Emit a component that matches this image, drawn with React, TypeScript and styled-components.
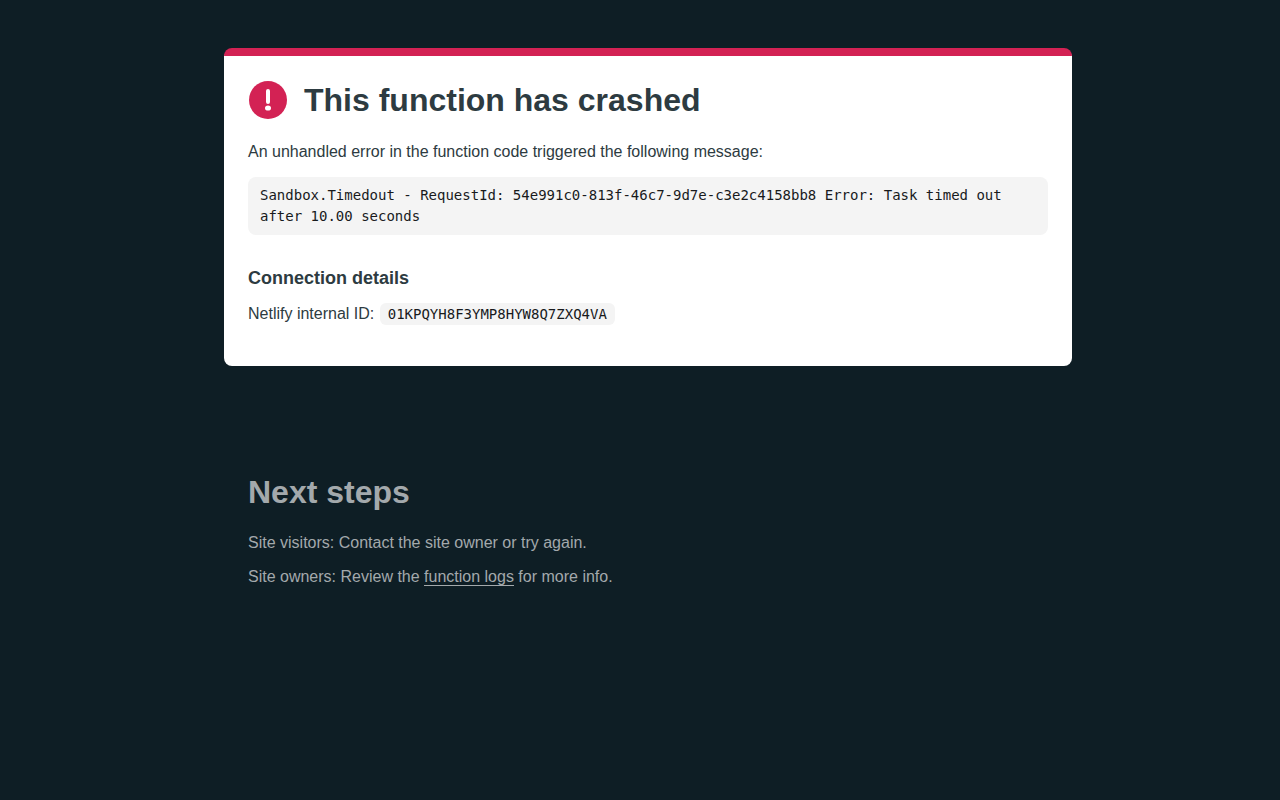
import React from "react";
import styled, { createGlobalStyle } from "styled-components";

const Global = createGlobalStyle`
  html, body { margin: 0; padding: 0; background: #0e1e25; }
  body { font-family: "Liberation Sans", Arial, sans-serif; font-size: 16px; line-height: 24px; }
`;
const Page = styled.main`
  width: 848px;
  margin: 0 auto;
  padding-top: 48px;
  min-height: 800px;
  box-sizing: border-box;
  position: relative;
  left: 8px;
`;
const Card = styled.section`
  background: #fff;
  border-top: 8px solid #d32254;
  border-radius: 8px;
  padding: 24px 24px 24px;
  height: 318px;
  box-sizing: border-box;
  color: #2d3b41;
`;
const Header = styled.div`
  display: flex;
  align-items: center;
  gap: 16px;
  height: 40px;
`;
const Title = styled.h1`
  margin: 0;
  font-size: 32px;
  line-height: 40px;
  font-weight: 700;
  color: #2d3b41;
`;
const Text = styled.p`
  margin: 0;
  font-size: 16px;
  line-height: 24px;
`;
const Intro = styled(Text)`
  margin-top: 20px;
`;
const CodeBlock = styled.pre`
  margin: 13px 0 0;
  padding: 8px 12px;
  background: #f4f4f4;
  border-radius: 8px;
  font-family: "DejaVu Sans Mono", "Liberation Mono", monospace;
  font-size: 14px;
  line-height: 21px;
  color: #181a1c;
  white-space: pre-wrap;
`;
const Sub = styled.h2`
  margin: 30px 0 0;
  font-size: 18px;
  line-height: 26px;
  font-weight: 700;
`;
const Row = styled.p`
  margin: 10px 0 0;
  line-height: 26px;
`;
const InlineCode = styled.code`
  background: #f4f4f4;
  border-radius: 6px;
  padding: 3px 8px;
  margin-left: 1px;
  font-family: "DejaVu Sans Mono", "Liberation Mono", monospace;
  font-size: 14px;
  color: #181a1c;
`;
const Steps = styled.section`
  margin-top: 106px;
  padding: 0 24px;
  color: #a3a9ac;
`;
const StepsTitle = styled.h2`
  margin: 0;
  font-size: 32px;
  line-height: 40px;
  font-weight: 700;
  color: #a3a9ac;
`;
const Step = styled.p`
  margin: 0;
  line-height: 34px;
`;
const StepIntro = styled(Step)`
  margin-top: 14px;
`;
const LogLink = styled.a`
  color: inherit;
  text-decoration: none;
  border-bottom: 1px solid currentColor;
`;

export default function App() {
  return (
    <>
      <Global />
      <Page>
        <Card>
          <Header>
            <svg width="40" height="40" viewBox="0 0 40 40" aria-hidden="true">
              <circle cx="20" cy="20" r="19" fill="#d32254" />
              <rect x="18" y="9" width="4" height="15" rx="2" fill="#fff" />
              <ellipse cx="20" cy="28" rx="3" ry="2.6" fill="#fff" />
            </svg>
            <Title>This function has crashed</Title>
          </Header>
          <Intro>An unhandled error in the function code triggered the following message:</Intro>
          <CodeBlock>Sandbox.Timedout - RequestId: 54e991c0-813f-46c7-9d7e-c3e2c4158bb8 Error: Task timed out after 10.00 seconds</CodeBlock>
          <Sub>Connection details</Sub>
          <Row>
            Netlify internal ID: <InlineCode>01KPQYH8F3YMP8HYW8Q7ZXQ4VA</InlineCode>
          </Row>
        </Card>
        <Steps>
          <StepsTitle>Next steps</StepsTitle>
          <StepIntro>Site visitors: Contact the site owner or try again.</StepIntro>
          <Step>
            Site owners: Review the <LogLink href="#">function logs</LogLink> for more info.
          </Step>
        </Steps>
      </Page>
    </>
  );
}
